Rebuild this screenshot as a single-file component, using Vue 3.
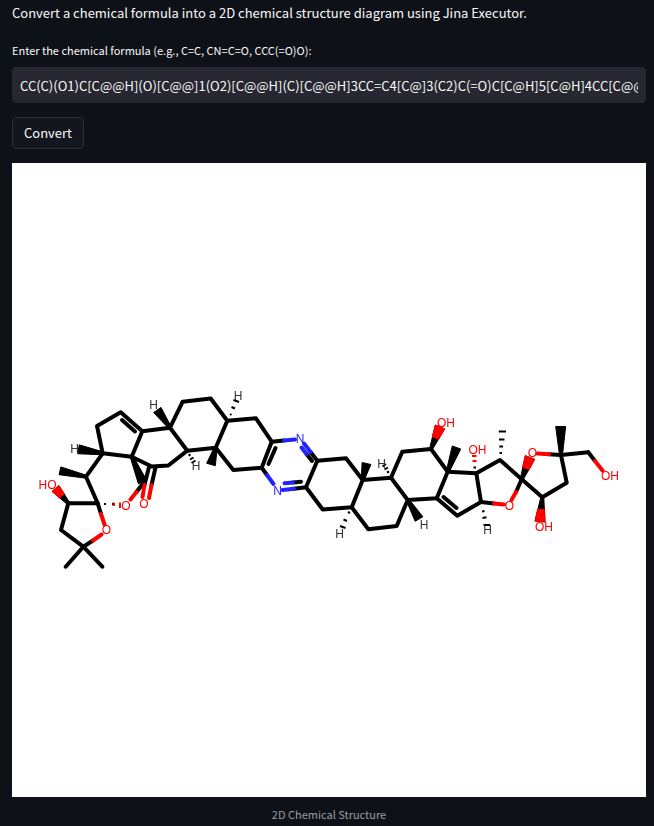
<script setup>
import { ref } from 'vue'

const formula = ref('CC(C)(O1)C[C@@H](O)[C@@]1(O2)[C@@H](C)[C@@H]3CC=C4[C@]3(C2)C(=O)C[C@H]5[C@H]4CC[C@@H]6')

// Plain bonds, grouped by colour; each entry is a path.
const carbonBonds = [
  'M102.7 453.3L97 426L120.7 412.3L142.3 431.3L131.7 456.7Z',
  'M122 420L135 431.5',
  'M102.7 453.3L86 476.7L97.7 503.3H68.3L61 530L83.3 546.7L65.7 566.7M83.3 546.7L102.3 566.7',
  'M97.7 503.3L101 514M83.3 546.7L93 540.5M136.5 492L142.5 484',
  'M131.7 456.7L151.7 466.5L168.3 465.5L187.3 450.7L170 427.7L142.3 431.3',
  'M149 467L144.5 485M155.5 467.5L151.5 485',
  'M170 427.7L182.7 401.7L210.7 398.5L227.3 420.7L215.7 447.7L187.3 450.7',
  'M227.3 420.7L256 418.3L271.7 441.7L261.7 467.7L233.3 470L215.7 447.7',
  'M275.5 448L268.5 464M271.7 441.7L284 440.5M261.7 467.7L267 475',
  'M317.3 460.7L306 487.3L294 488.8M317.3 460.7L310.5 452M312 461L306.5 454M301 481.7L293 482.5',
  'M317.3 460.7L346 458.3L362.7 480L351.7 507.3L322.7 509.5L306 487.3',
  'M362.7 480L391 477.7L407.7 500L396.7 526L368.3 529.3L351.7 507.3',
  'M391 477.7L402.3 451.7L431 449L447.7 471.7L436.7 498.3L407.7 500',
  'M447.7 471.7L476.3 473.3L481 502L457.3 515.7L436.7 498.3M443.5 497L456.5 508',
  'M476.3 473.3L500 460L521.7 479.3L542.3 497.3L566.7 482.7L561 455L588.3 452.3',
  'M481 502L494 503.4M521.7 479.3L516 492M561 455L549 454.2M588.3 452.3L595 461'
]
const oxygenBonds = [
  'M101 514L104.5 524.5M93 540.5L101.5 534.5M130.5 499.5L136.5 492',
  'M144.5 485L142.5 497M151.5 485L149 498',
  'M494 503.4L504 504.4M516 492L511.5 500M549 454.2L537.5 453.6M595 461L602.5 470.5'
]
const nitrogenBonds = [
  'M284 440.5L295 439.5M267 475L273.5 484',
  'M310.5 452L304 443.5M306.5 454L301.5 447.5M294 488.8L282.5 490M293 482.5L284.5 483.3'
]

// Stereo wedges: narrow end, wide end, width of the wide end, optional colour of the far half.
const wedgeData = [
  [102.7, 453.3, 78.5, 449.3, 9], [86, 476.7, 60, 470.8, 8],
  [68.3, 503.3, 55.5, 488.5, 9, 'o'], [131.7, 456.7, 142.5, 482, 9],
  [170, 427.7, 157.3, 410, 9], [215.7, 447.7, 211, 464.5, 9],
  [362.7, 480, 366.5, 463.5, 9], [407.7, 500, 419, 519, 9],
  [431, 449, 440, 427, 10, 'o'], [447.7, 471.7, 456.5, 447.5, 9],
  [521.7, 479.3, 530, 457.5, 10, 'o'], [561, 455, 560.7, 426.5, 10],
  [542.3, 497.3, 540, 521.5, 10, 'o']
]

function wedgePoints(x1, y1, x2, y2, startWidth, endWidth) {
  const len = Math.hypot(x2 - x1, y2 - y1)
  const nx = -(y2 - y1) / len / 2
  const ny = (x2 - x1) / len / 2
  return [
    [x1 + nx * startWidth, y1 + ny * startWidth],
    [x2 + nx * endWidth, y2 + ny * endWidth],
    [x2 - nx * endWidth, y2 - ny * endWidth],
    [x1 - nx * startWidth, y1 - ny * startWidth]
  ].map((p) => p.join(',')).join(' ')
}

const wedges = wedgeData.flatMap(([x1, y1, x2, y2, w, far]) => {
  const all = { cls: 'c', points: wedgePoints(x1, y1, x2, y2, 3, w) }
  if (!far) return [all]
  const mx = (x1 + x2) / 2
  const my = (y1 + y2) / 2
  return [all, { cls: far, points: wedgePoints(mx, my, x2, y2, w / 2 + 2, w) }]
})

const hashes = [
  { cls: 'c', d: 'M105 503V505M113 502.8V505.6M230 414L231.5 415M231.5 407L235 408.5M233.5 400L239 402' },
  { cls: 'o', d: 'M114 502.8V506M120 502.5V508' },
  { cls: 'c', d: 'M188.5 455.5L190.5 454.5M190 459.5L193.5 457.5M191.5 463L195.5 460.5' },
  { cls: 'c', d: 'M348 512L350 513M343.5 519.5L347 521M340 526L345.5 528' },
  { cls: 'c', d: 'M387 472.5L389 471.5M384.5 469.5L388 467.5M382.5 466.5L386 464' },
  { cls: 'c', d: 'M473.5 467.5H476M499.5 453H502M499.3 446.5H503M499 439.5H504.5M498.8 431.5H506' },
  { cls: 'o', d: 'M472.5 461H476.5M472 456H476.5' },
  { cls: 'c', d: 'M482 511.5L484.5 511M482.5 518L486.5 517.3M483.5 525H490' }
]

const labels = [
  { t: 'H', x: 74.5, y: 449, c: 'h' }, { t: 'H', x: 153.5, y: 405, c: 'h' },
  { t: 'H', x: 238, y: 396, c: 'h' }, { t: 'H', x: 196, y: 465.5, c: 'h' },
  { t: 'H', x: 381.5, y: 463.5, c: 'h' }, { t: 'H', x: 339.5, y: 533.5, c: 'h' },
  { t: 'H', x: 424, y: 524.5, c: 'h' }, { t: 'H', x: 487.5, y: 530, c: 'h' },
  { t: 'N', x: 300, y: 438.5, c: 'n' }, { t: 'N', x: 277.5, y: 490.5, c: 'n' },
  { t: 'HO', x: 47.5, y: 485, c: 'o' }, { t: 'O', x: 106.5, y: 530, c: 'o' },
  { t: 'O', x: 126, y: 506, c: 'o' }, { t: 'O', x: 144, y: 504, c: 'o' },
  { t: 'OH', x: 446, y: 423, c: 'o' }, { t: 'OH', x: 477.5, y: 449.5, c: 'o' },
  { t: 'O', x: 509.5, y: 505.5, c: 'o' }, { t: 'O', x: 532.3, y: 453, c: 'o' },
  { t: 'OH', x: 610, y: 476, c: 'o' }, { t: 'OH', x: 544, y: 526.5, c: 'o' }
]
</script>

<template>
  <main class="page">
    <p class="intro">Convert a chemical formula into a 2D chemical structure diagram using Jina Executor.</p>
    <form class="form" @submit.prevent>
      <label class="label" for="formula">Enter the chemical formula (e.g., C=C, CN=C=O, CCC(=O)O):</label>
      <input id="formula" v-model="formula" class="field" type="text" spellcheck="false" autocomplete="off" />
      <button class="convert" type="submit">Convert</button>
    </form>
    <figure class="result">
      <svg class="structure" viewBox="12 163 634 634" role="img" aria-labelledby="caption">
        <g class="molecule">
          <path v-for="d in carbonBonds" :key="d" class="bond c" :d="d" />
          <path v-for="d in oxygenBonds" :key="d" class="bond o" :d="d" />
          <path v-for="d in nitrogenBonds" :key="d" class="bond n" :d="d" />
          <polygon v-for="w in wedges" :key="w.points" class="wedge" :class="w.cls" :points="w.points" />
          <path v-for="h in hashes" :key="h.d" class="hash" :class="h.cls" :d="h.d" />
          <text v-for="l in labels" :key="l.x" class="atom" :class="l.c" :x="l.x" :y="l.y + 4">{{ l.t }}</text>
        </g>
      </svg>
      <figcaption id="caption" class="caption">2D Chemical Structure</figcaption>
    </figure>
  </main>
</template>

<style>
body {
  margin: 0;
  background: #0e1117;
}
</style>

<style scoped>
.page {
  padding: 2px 8px 0 12px;
  color: #fafafa;
  font-family: "Noto Sans CJK SC", "Noto Sans", sans-serif;
}
.intro {
  margin: 0;
  font-size: 13px;
  line-height: 22px;
}
.form {
  display: flex;
  flex-direction: column;
  align-items: flex-start;
  margin-top: 16px;
}
.label {
  font-size: 11px;
  line-height: 20px;
}
.field {
  box-sizing: border-box;
  width: 100%;
  height: 36px;
  margin: 7px 0 14px;
  padding: 0 7px;
  border: 1px solid #262730;
  border-radius: 4px;
  background: #262730;
  color: #fafafa;
  font: 13px/20px "Noto Sans CJK SC", "Noto Sans", sans-serif;
}
.field:focus {
  outline: none;
  border-color: #ff4b4b;
}
.convert {
  height: 32px;
  padding: 0 11px;
  border: 1px solid #2b2d35;
  border-radius: 4px;
  background: #13161e;
  color: #fafafa;
  font: 13px/20px "Noto Sans CJK SC", "Noto Sans", sans-serif;
  cursor: pointer;
}
.result {
  margin: 14px 0 0;
}
.structure {
  display: block;
  width: 100%;
  background: #fff;
}
.caption {
  padding-top: 7px;
  color: #9c9da1;
  font-size: 11px;
  line-height: 20px;
  text-align: center;
}
.molecule {
  filter: blur(0.6px);
}
.bond {
  fill: none;
  stroke: currentColor;
  stroke-width: 4;
  stroke-linecap: round;
  stroke-linejoin: round;
}
.wedge {
  fill: currentColor;
  stroke: currentColor;
  stroke-width: 1;
  stroke-linejoin: round;
}
.hash {
  fill: none;
  stroke: currentColor;
  stroke-width: 2;
}
.atom {
  fill: currentColor;
  font: 12px "Liberation Sans", sans-serif;
  text-anchor: middle;
}
.c {
  color: #000;
}
.h {
  color: #333;
}
.o {
  color: #f00;
}
.n {
  color: #22f;
}
</style>
